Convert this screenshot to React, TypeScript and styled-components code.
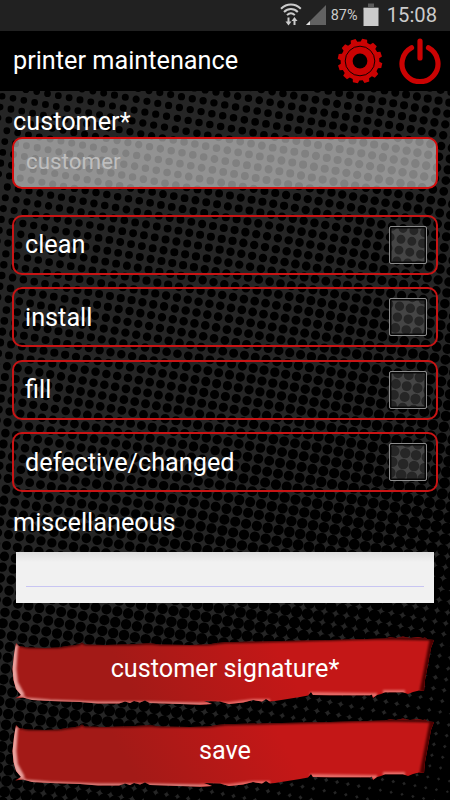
import { FC, useId } from 'react';

import styled, { createGlobalStyle } from 'styled-components';

const GlobalStyle = createGlobalStyle`
  * {
    box-sizing: border-box;
  }

  body {
    margin: 0;
    background: #000;
    font-family: Roboto, "Liberation Sans", sans-serif;
  }
`;

const Screen = styled.div`
  position: relative;
  display: flex;
  flex-direction: column;
  width: 450px;
  height: 800px;
  overflow: hidden;
  background: #000;
  color: #fff;
`;

const StatusBar = styled.div`
  position: relative;
  display: flex;
  align-items: center;
  justify-content: flex-end;
  height: 31px;
  padding-right: 13px;
  background: #212121;
  color: #cbcbcb;
`;

const BatteryLevel = styled.span`
  width: 31px;
  margin-left: 2px;
  font-size: 14.4px;
  line-height: 32px;
`;

const Clock = styled.span`
  margin-left: 7px;
  font-size: 20.2px;
  line-height: 31px;
`;

const Header = styled.header`
  position: relative;
  display: flex;
  align-items: center;
  height: 60px;
  padding: 0 9px 0 13px;
  background: #000;
`;

const Title = styled.h1`
  flex: 1;
  margin: 0;
  font-size: 25.25px;
  font-weight: 400;
  line-height: 62px;
  white-space: nowrap;
`;

const IconButton = styled.button`
  display: flex;
  margin: 0 0 0 16px;
  padding: 0;
  border: 0;
  background: none;
`;

const Backdrop = styled.svg`
  position: absolute;
  top: 0;
  left: 0;
`;

const Form = styled.main`
  position: relative;
  display: flex;
  flex-direction: column;
  padding: 14px 12px 0;
`;

const Label = styled.label`
  height: 32px;
  padding-left: 1px;
  font-size: 25.25px;
  line-height: 34px;
`;

const CustomerInput = styled.input`
  height: 52px;
  padding: 0 12px 4px;
  border: 2px solid #d40c0c;
  border-radius: 10px;
  outline: 0;
  background: rgba(255, 255, 255, 0.5);
  color: #fff;
  font-family: inherit;
  font-size: 22.4px;

  &::placeholder {
    color: #bebebe;
    opacity: 1;
  }
`;

const Tasks = styled.div`
  display: flex;
  flex-direction: column;
  gap: 12.6px;
  margin: 25.6px 0 13.6px;
`;

const TaskRow = styled.div`
  display: flex;
  align-items: center;
  justify-content: space-between;
  height: 60px;
  padding: 0 9px 0 11px;
  border: 2px solid #c81414;
  border-radius: 10px;
  font-size: 25.25px;
`;

const Checkbox = styled.span`
  width: 38px;
  height: 38px;
  border: 1.5px solid #8c8c8c;
  border-radius: 2px;
  background: rgba(255, 255, 255, 0.15);
  box-shadow: inset 0 0 0 1.5px #080808;
`;

const Notes = styled.div`
  display: flex;
  align-items: flex-end;
  height: 51px;
  margin: 14px 4px 0;
  padding: 0 10px 16px;
  background: linear-gradient(#dedede, #f1f1f1 10px);
`;

const NotesLine = styled.span`
  flex: 1;
  height: 1px;
  background: #c8c5f2;
`;

const Actions = styled.div`
  display: flex;
  flex-direction: column;
  gap: 11.7px;
  margin-top: 32px;
`;

const BrushButton = styled.button`
  position: relative;
  height: 70px;
  padding: 0 0 2px;
  border: 0;
  background: none;
  color: #fff;
  font-family: inherit;
  font-size: 25.25px;
  line-height: 68px;
`;

const BrushShape = styled.svg`
  position: absolute;
  top: 0;
  left: -12px;
`;

const BrushLabel = styled.span`
  position: relative;
`;

// Halftone grid, tilted a little, whose dots grow towards the lower right
const STEP_X = 10.82;
const STEP_Y = 2.056;

const halftone = () => {
  const parts: string[] = [];
  for (let m = -3; m < 60; m += 1) {
    for (let n = -12; n < 70; n += 1) {
      const x = 13 + m * STEP_X - n * STEP_Y;
      const y = 98.3 + m * STEP_Y + n * STEP_X;
      if (x < -8 || x > 458 || y < 83 || y > 808) continue;
      const u = x / 450;
      const v = (y - 98) / 700;
      const r = 3.3 + 0.8 * u + 1.6 * v + 0.6 * v * v + 0.5 * u * v;
      const d = (r * 2).toFixed(2);
      const q = r.toFixed(2);
      parts.push(
        `M${(x - r).toFixed(2)} ${y.toFixed(2)}a${q} ${q} 0 1 0 ${d} 0a${q} ${q} 0 1 0 -${d} 0`,
      );
    }
  }
  return parts.join('');
};

const DOTS = halftone();

const gear = () => {
  const points: string[] = [];
  for (let i = 0; i < 12; i += 1) {
    const mid = 18 + i * 30;
    [
      [-10, 19.4],
      [-6.5, 22.4],
      [6.5, 22.4],
      [10, 19.4],
    ].forEach(([offset, radius]) => {
      const angle = ((mid + offset) * Math.PI) / 180;
      points.push(
        `${(23 + radius * Math.cos(angle)).toFixed(2)},${(23 - radius * Math.sin(angle)).toFixed(2)}`,
      );
    });
  }
  return points.join(' ');
};

const GEAR = gear();

const BRUSH =
  'M16 8L19 11L28 12.5L45 13L58 12.5L67 11L74 10.3L79 9.3L82 7.5L85 9.5L105 10L130 9.3L150 8.2L160 9.5L190 10L208 9.5L217 8L225 7.3L270 6.3L330 5L385 3.5L390 2.3L396 3L403 1.5L410 3L418 2L423 3L425 2.5L428 4.5L434 5L431 13L428 29L425 45L424 56L419 55.5L413 57L408 59L403 57.3L385 57.3L381 59L377 60L373 63L372 59.5L370 60.3L330 60.3L313 60L311 57L308 60.5L300 62L275 66L270 66.5L266 64L262 66.5L253 65L243 67.5L229 69L220 66.5L204 66L212 69L200 69.7L180 69L150 68L145 65.5L140 67.5L134 66L130 68L125 66.5L119 68.5L98 68.5L80 67L50 66L32 65L23 62.5L15 63.5L21 60L16 54L13.5 45L12.5 34L14 20Z';

const StatusIcons: FC = () => (
  <svg width="50" height="31" viewBox="0 0 50 31" fill="none">
    <g stroke="#cbcbcb" strokeWidth="2">
      <path d="M2 8.8C7.8 3.2 16 3.2 21.8 8.8" />
      <path d="M5 12C9 8 14.8 8 18.8 12" />
      <path d="M8 15.1C10.4 12.6 13.4 12.6 15.8 15.1" />
    </g>
    <path
      d="M8.5 17.5h2v4h2l-3 4-3-4h2zM14.5 25v-4h-2l3-4 3 4h-2v4z"
      fill="#cbcbcb"
    />
    <path d="M47 5v20H27z" fill="#626262" />
    <path d="M31 21v4h-4z" fill="#e0e0e0" />
  </svg>
);

const BatteryIcon: FC = () => (
  <svg width="18" height="31" viewBox="0 0 18 31">
    <path d="M6 3.5h6V7h4.5v3H1.5V7H6z" fill="#5b5b5b" />
    <path d="M1.5 8h15v18h-15z" fill="#cbcbcb" />
  </svg>
);

const GearIcon: FC = () => (
  <svg width="46" height="46" viewBox="0 0 46 46">
    <polygon points={GEAR} fill="#cb0303" />
    <circle cx="23" cy="23" r="14.8" fill="none" stroke="#000" strokeWidth="0.9" />
    <circle cx="23" cy="23" r="7.4" fill="#000" />
  </svg>
);

const PowerIcon: FC = () => (
  <svg width="42" height="46" viewBox="0 0 42 46" fill="none">
    <path
      d="M12.5 9.8A18 18 0 1 0 29.5 9.8M21 3.2V20"
      stroke="#cb0303"
      strokeWidth="5.2"
      strokeLinecap="round"
    />
  </svg>
);

type ActionButtonProps = {
  label: string;
};

const ActionButton: FC<ActionButtonProps> = (props) => {
  const { label } = props;
  const id = useId();
  return (
    <BrushButton type="button">
      <BrushShape width="450" height="72" viewBox="0 0 450 72" fill="none">
        <defs>
          <linearGradient
            id={`${id}fill`}
            gradientUnits="userSpaceOnUse"
            x1="140"
            y1="70"
            x2="270"
            y2="0"
          >
            <stop offset="0" stopColor="#a31a17" />
            <stop offset="1" stopColor="#c41717" />
          </linearGradient>
          <clipPath id={`${id}clip`}>
            <path d={BRUSH} />
          </clipPath>
          <filter id={`${id}blur`} x="-10%" y="-50%" width="120%" height="200%">
            <feGaussianBlur stdDeviation="1.3" />
          </filter>
        </defs>
        <path d={BRUSH} fill={`url(#${id}fill)`} />
        <g clipPath={`url(#${id}clip)`}>
          <g filter={`url(#${id}blur)`}>
            <path
              d="M18 10L28 12L58 12L79 9L82 7L85 9L130 9L150 8L160 9L208 9L225 7L385 3L428 4L436 4L424 57"
              stroke="#2a0000"
              strokeWidth="2.6"
            />
            <path d="M434 5L424 57" stroke="#4d0505" strokeWidth="9" />
            <path
              d="M22 61L26 64L50 66L98 68L150 68L200 69"
              stroke="#e08a86"
              strokeWidth="3"
            />
            <path d="M15 10L13.5 34L15 48L22 61" stroke="#e9a09c" strokeWidth="6" />
            <path
              d="M200 69L229 69L253 66L270 66M310 59L370 60L377 60M383 57L405 57"
              stroke="#e66e6a"
              strokeWidth="4"
            />
          </g>
        </g>
      </BrushShape>
      <BrushLabel>{label}</BrushLabel>
    </BrushButton>
  );
};

const tasks = ['clean', 'install', 'fill', 'defective/changed'];

const App: FC = () => (
  <Screen>
    <GlobalStyle />
    <Backdrop width="450" height="800" viewBox="0 0 450 800">
      <rect y="91" width="450" height="709" fill="#252525" />
      <path d={DOTS} fill="#000" />
    </Backdrop>
    <StatusBar>
      <StatusIcons />
      <BatteryLevel>87%</BatteryLevel>
      <BatteryIcon />
      <Clock>15:08</Clock>
    </StatusBar>
    <Header>
      <Title>printer maintenance</Title>
      <IconButton type="button" aria-label="settings">
        <GearIcon />
      </IconButton>
      <IconButton type="button" aria-label="exit">
        <PowerIcon />
      </IconButton>
    </Header>
    <Form>
      <Label>customer*</Label>
      <CustomerInput placeholder="customer" />
      <Tasks>
        {tasks.map((task) => (
          <TaskRow key={task}>
            {task}
            <Checkbox />
          </TaskRow>
        ))}
      </Tasks>
      <Label>miscellaneous</Label>
      <Notes>
        <NotesLine />
      </Notes>
      <Actions>
        <ActionButton label="customer signature*" />
        <ActionButton label="save" />
      </Actions>
    </Form>
  </Screen>
);

export default App;
